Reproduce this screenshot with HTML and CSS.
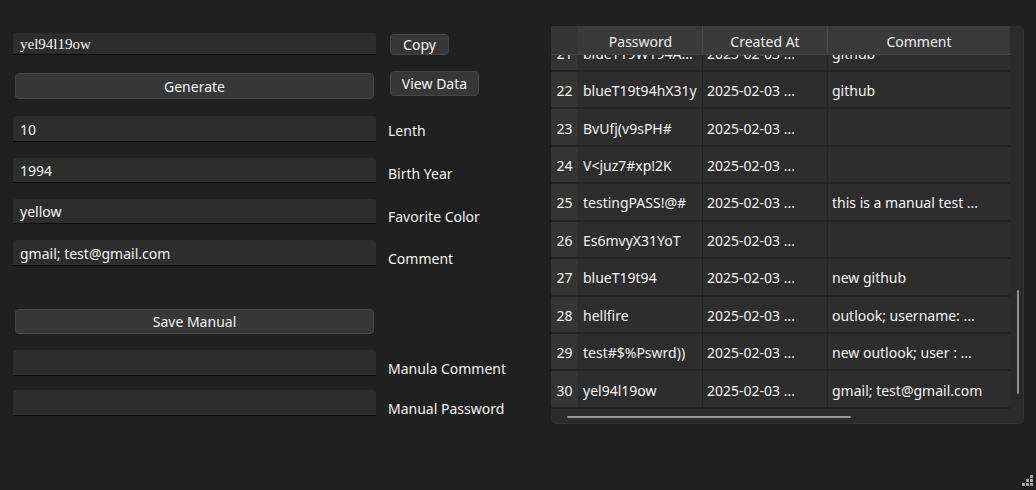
FILE: index.html
```
<!DOCTYPE html>
<html lang="en">
<head>
<meta charset="utf-8">
<title>Password Generator</title>
<link rel="stylesheet" href="styles.css">
</head>
<body>
<div class="app">
  <div class="form">
    <div class="row r1">
      <div class="field serif">yel94l19ow</div>
      <button class="btn copy">Copy</button>
    </div>
    <div class="row r2">
      <button class="btn wide gen">Generate</button>
      <button class="btn view">View Data</button>
    </div>
    <div class="row r3">
      <div class="field">10</div>
      <div class="label up2">Lenth</div>
    </div>
    <div class="row r4">
      <div class="field">1994</div>
      <div class="label up0">Birth Year</div>
    </div>
    <div class="row r5">
      <div class="field">yellow</div>
      <div class="label">Favorite Color</div>
    </div>
    <div class="row r6">
      <div class="field">gmail; test@gmail.com</div>
      <div class="label">Comment</div>
    </div>
    <div class="row r7">
      <button class="btn wide save">Save Manual</button>
    </div>
    <div class="row r8">
      <div class="field"></div>
      <div class="label">Manula Comment</div>
    </div>
    <div class="row r9">
      <div class="field"></div>
      <div class="label">Manual Password</div>
    </div>
  </div>

  <section class="panel">
    <div class="thead">
      <div class="corner"></div>
      <div class="th w-pw">Password</div>
      <div class="th w-ca">Created At</div>
      <div class="th w-cm">Comment</div>
    </div>
    <div class="tbody">
      <div class="rows">
        <div class="tr"><div class="num">21</div><div class="td w-pw">blueT19W194A...</div><div class="td w-ca">2025-02-03 ...</div><div class="td w-cm">github</div></div>
        <div class="tr"><div class="num">22</div><div class="td w-pw">blueT19t94hX31y</div><div class="td w-ca">2025-02-03 ...</div><div class="td w-cm">github</div></div>
        <div class="tr"><div class="num">23</div><div class="td w-pw">BvUfj(v9sPH#</div><div class="td w-ca">2025-02-03 ...</div><div class="td w-cm"></div></div>
        <div class="tr"><div class="num">24</div><div class="td w-pw">V&lt;juz7#xp!2K</div><div class="td w-ca">2025-02-03 ...</div><div class="td w-cm"></div></div>
        <div class="tr"><div class="num">25</div><div class="td w-pw">testingPASS!@#</div><div class="td w-ca">2025-02-03 ...</div><div class="td w-cm">this is a manual test ...</div></div>
        <div class="tr"><div class="num">26</div><div class="td w-pw">Es6mvyX31YoT</div><div class="td w-ca">2025-02-03 ...</div><div class="td w-cm"></div></div>
        <div class="tr"><div class="num">27</div><div class="td w-pw">blueT19t94</div><div class="td w-ca">2025-02-03 ...</div><div class="td w-cm">new github</div></div>
        <div class="tr"><div class="num">28</div><div class="td w-pw">hellfire</div><div class="td w-ca">2025-02-03 ...</div><div class="td w-cm">outlook; username: ...</div></div>
        <div class="tr"><div class="num">29</div><div class="td w-pw">test#$%Pswrd))</div><div class="td w-ca">2025-02-03 ...</div><div class="td w-cm">new outlook; user : ...</div></div>
        <div class="tr"><div class="num">30</div><div class="td w-pw">yel94l19ow</div><div class="td w-ca">2025-02-03 ...</div><div class="td w-cm">gmail; test@gmail.com</div></div>
      </div>
    </div>
    <div class="hscroll"></div>
    <div class="vscroll"></div>
  </section>
</div>
<svg class="grip" width="12" height="12" viewBox="0 0 12 12" aria-hidden="true">
  <rect x="9" y="1" width="3" height="3" fill="#a8a8a8"/>
  <rect x="5" y="5" width="3" height="3" fill="#a8a8a8"/>
  <rect x="9" y="5" width="3" height="3" fill="#a8a8a8"/>
  <rect x="1" y="9" width="3" height="3" fill="#a8a8a8"/>
  <rect x="5" y="9" width="3" height="3" fill="#a8a8a8"/>
  <rect x="9" y="9" width="3" height="3" fill="#a8a8a8"/>
</svg>
</body>
</html>
```
FILE: styles.css
```
html, body {
  margin: 0;
  padding: 0;
  width: 1036px;
  height: 490px;
  overflow: hidden;
  background: #202020;
  color: #f2f2f2;
  font-family: "Noto Sans", "Open Sans", sans-serif;
  font-size: 14px;
}

.app {
  display: flex;
  align-items: flex-start;
}

.form {
  flex: 0 0 538px;
  box-sizing: border-box;
  padding-left: 13px;
  display: flex;
  flex-direction: column;
}

.row {
  display: grid;
  grid-template-columns: 363px auto;
  column-gap: 12px;
  align-items: stretch;
}

.r1 { margin-top: 33px; height: 22px; }
.r2 { margin-top: 16px; height: 28px; }
.r3 { margin-top: 17px; height: 26px; }
.r4 { margin-top: 16px; height: 25px; }
.r5 { margin-top: 16px; height: 25px; }
.r6 { margin-top: 16px; height: 26px; }
.r7 { margin-top: 43px; height: 25px; }
.r8 { margin-top: 16px; height: 26px; }
.r9 { margin-top: 14px; height: 26px; }

.field {
  box-sizing: border-box;
  background: #2d2d2d;
  border-radius: 3px 3px 0 0;
  border-bottom: 1px solid #0c0c0c;
  padding: 2px 7px 0;
  display: flex;
  align-items: center;
  line-height: 1;
  color: #f2f2f2;
}

.serif {
  font-family: "Liberation Serif", "Times New Roman", serif;
  font-size: 15px;
  padding-top: 1px;
}

.label {
  align-self: end;
  line-height: 20px;
  margin-bottom: -3px;
  white-space: nowrap;
}
.label.up2 { margin-bottom: 1px; }
.label.up0 { margin-bottom: -1px; }

.btn {
  box-sizing: border-box;
  font: inherit;
  color: #f2f2f2;
  background: #373737;
  border: 1px solid #464646;
  border-radius: 4px;
  padding: 1px 0 0;
  line-height: 1;
  display: flex;
  align-items: center;
  justify-content: center;
}

.copy {
  width: 59px;
  height: 21px;
  margin-left: 2px;
  align-self: end;
}

.wide {
  margin: 0 2px;
}

.gen {
  height: 26px;
  align-self: end;
}

.view {
  width: 89px;
  height: 25px;
  margin-left: 2px;
  align-self: start;
}

.save {
  height: 25px;
}

/* table panel */
.panel {
  position: relative;
  margin-top: 26px;
  margin-left: 13px;
  width: 473px;
  height: 398px;
  box-sizing: border-box;
  background: #2b2b2b;
  border: 1px solid #333333;
  border-top: 0;
  border-left: 0;
  border-radius: 0 5px 5px 5px;
  overflow: hidden;
  display: flex;
  flex-direction: column;
}

.thead {
  display: flex;
  height: 29px;
  flex: 0 0 29px;
  box-sizing: border-box;
  border-bottom: 1px solid #474747;
  width: 459px;
  position: relative;
  z-index: 1;
}

.corner {
  width: 28px;
  background: #353535;
  border-right: 1px solid #3d3d3d;
  box-sizing: border-box;
}

.th {
  box-sizing: border-box;
  background: #3a3a3a;
  border-right: 1px solid #474747;
  display: flex;
  align-items: center;
  justify-content: center;
  padding-top: 2px;
  color: #ededed;
}
.th.w-cm { border-right: 0; }

.w-pw { width: 124px; }
.w-ca { width: 125px; }
.w-cm { width: 182px; }

.tbody {
  height: 354px;
  flex: 0 0 354px;
  overflow: hidden;
  width: 459px;
}

.rows {
  margin-top: -20.5px;
  display: grid;
  grid-auto-rows: 37.45px;
}

.tr {
  display: flex;
  box-sizing: border-box;
  border-bottom: 2px solid #232323;
}

.num {
  width: 28px;
  box-sizing: border-box;
  background: #343434;
  border-right: 1px solid #2a2a2a;
  display: flex;
  align-items: center;
  justify-content: center;
  padding-top: 2px;
  color: #f2f2f2;
}

.td {
  box-sizing: border-box;
  background: #2d2d2d;
  border-right: 1px solid #232323;
  padding: 2px 0 0 4px;
  display: flex;
  align-items: center;
  white-space: nowrap;
  overflow: hidden;
}
.td.w-cm { border-right: 0; }

.hscroll {
  margin-top: 7px;
  margin-left: 16px;
  width: 284px;
  height: 2px;
  border-radius: 1px;
  background: #9a9a9a;
}

.vscroll {
  position: absolute;
  left: 466px;
  top: 264px;
  width: 2px;
  height: 104px;
  border-radius: 1px;
  background: #8f8f8f;
}

.grip {
  position: absolute;
  right: 3px;
  bottom: 4px;
}
```
